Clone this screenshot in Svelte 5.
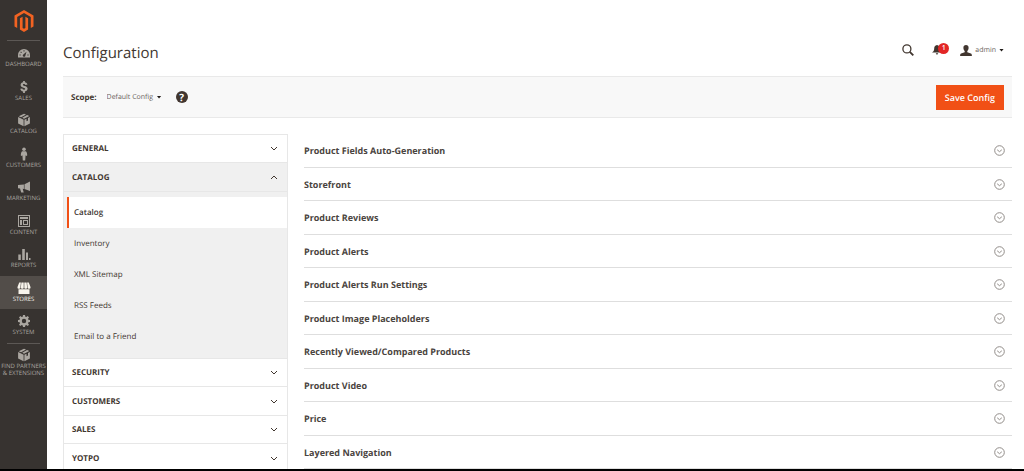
<script lang="ts">
  type MenuItem = { id: string; label: string; divider?: boolean };

  const menu: MenuItem[] = [
    { id: "dashboard", label: "Dashboard" },
    { id: "sales", label: "Sales" },
    { id: "catalog", label: "Catalog" },
    { id: "customers", label: "Customers" },
    { id: "marketing", label: "Marketing" },
    { id: "content", label: "Content" },
    { id: "reports", label: "Reports" },
    { id: "stores", label: "Stores" },
    { id: "system", label: "System" },
    { id: "partners", label: "Find Partners & Extensions", divider: true },
  ];

  const tabs = [
    { label: "General", items: [] },
    { label: "Catalog", items: ["Catalog", "Inventory", "XML Sitemap", "RSS Feeds", "Email to a Friend"] },
    { label: "Security", items: [] },
    { label: "Customers", items: [] },
    { label: "Sales", items: [] },
    { label: "Yotpo", items: [] },
  ];

  const sections = [
    "Product Fields Auto-Generation",
    "Storefront",
    "Product Reviews",
    "Product Alerts",
    "Product Alerts Run Settings",
    "Product Image Placeholders",
    "Recently Viewed/Compared Products",
    "Product Video",
    "Price",
    "Layered Navigation",
  ];

  let activeMenu = $state("stores");
  let openTab = $state("Catalog");
  let activeItem = $state("Catalog");
  let scope = $state("Default Config");

  function toggleTab(label: string) {
    openTab = openTab === label ? "" : label;
  }
</script>

{#snippet menuIcon(id: string)}
  <svg class="icon" viewBox="0 0 14 14" fill="currentColor" aria-hidden="true">
    {#if id === "dashboard"}
      <path fill-rule="evenodd" d="M1 11.500V9.200a6 6.200 0 0 1 12 0v2.300zM5.700 9.600a1.400 1.400 0 0 0 2.400.8L9.500 5.800 6.300 8.600zM2.500 8.500h1.200v1H2.500zM4 5.500l.9.900-.7.700-.9-.9zM6.500 4.200h1v1.300h-1zM10.400 8.500h1.200v1h-1.200z" />
    {:else if id === "sales"}
      <path d="M6.100 1h1.800v1.300c1.400.2 2.300 1 2.600 2.300l-2.100.3c-.2-.6-.6-.9-1.400-.9s-1.100.3-1.100.8c0 .6.600.8 1.700 1.100 1.800.4 3 1.100 3 2.700 0 1.600-1 2.600-2.700 2.800V13H6.100v-1.600c-1.700-.2-2.600-1.200-2.800-2.700l2.100-.2c.2.800.7 1.200 1.600 1.200.8 0 1.200-.3 1.200-.8 0-.7-.7-.9-1.700-1.200C4.800 7.300 3.600 6.600 3.600 5c0-1.400.9-2.400 2.500-2.700z" />
    {:else if id === "catalog" || id === "partners"}
      <path d="M7 .8l2 .8-4.900 2.600-2.400-1zM10.100 2.100l2.200 1L7 5.700l-1.800-.9zM1.100 4.100l5.500 2.600v6.500l-5.500-2.700zM12.900 4.100v6.400l-5.500 2.700V6.700l2.100-1v2.600l1.500-.7V5z" />
    {:else if id === "customers"}
      <circle cx="7" cy="2.300" r="1.800" />
      <path d="M5.300 4.300h3.400c1 .5 1.500 2 1.500 4.100l-1.200.5-.4-.8-.4 5.400H5.800l-.4-5.400-.4.800-1.200-.5c0-2.100.5-3.600 1.500-4.100z" />
    {:else if id === "marketing"}
      <path d="M13 1.500v9.500L7.500 9V4.300zM1 5l5.900-.5v4.400L5.700 8.800l1 3.700H4.200L3 8.500l-2-.3z" />
    {:else if id === "content"}
      <path fill-rule="evenodd" d="M1 1h12v12H1zM2 2v10h10V2zM3 3h8v2H3zM3 6h2v5H3zM6 6h5v5H6zM7 7v3h3V7z" />
    {:else if id === "reports"}
      <path d="M1.300 7.500h2.500V13H1.300zM5.200 2h2.600v11H5.200zM9 5.500h2V13H9zM12 11h1.500v2H12z" />
    {:else if id === "stores"}
      <path d="M2.200 1.500h1.700L3.400 6v.8c0 1.400-2.900 1.400-2.900 0V6zM4.400 1.500h2.300v5.300c0 1.400-2.800 1.400-2.800 0V6zM7.300 1.500h2.300l.5 4.500v.8c0 1.400-2.800 1.400-2.800 0zM10.100 1.500h1.700L13.500 6v.8c0 1.400-2.900 1.400-2.900 0V6zM1.500 8.300h11V13H1.500z" />
    {:else if id === "system"}
      <path fill-rule="evenodd" d="M6 1h2l.3 1.700 1 .4 1.400-1 1.300 1.300-1 1.400.4 1L13 6v2l-1.600.3-.4 1 1 1.400-1.300 1.300-1.400-1-1 .4L8 13H6l-.3-1.600-1-.4-1.400 1L2 10.700l1-1.400-.4-1L1 8V6l1.600-.2.4-1-1-1.400L3.300 2.100l1.400 1 1-.4zM7 4.800a2.200 2.200 0 1 0 0 4.400 2.200 2.200 0 0 0 0-4.400z" />
    {/if}
  </svg>
{/snippet}

<div class="admin">
  <aside class="sidebar">
    <a class="logo" href="#home" aria-label="Magento Admin">
      <svg viewBox="0 0 20 22" fill="#f26322" aria-hidden="true">
        <path d="M10 0l9.500 5.500v11L16.800 18V7L10 3.100 3.200 7v11L.5 16.500v-11z" />
        <path d="M5.900 8.300l2.700-1.600v11.200L10 18.700l1.400-.8V6.700l2.700 1.600v11.300L10 22l-4.100-2.400z" />
      </svg>
    </a>
    <nav aria-label="Main menu">
      {#each menu as item}
        <a
          href="#{item.id}"
          class="menu-item"
          class:active={activeMenu === item.id}
          class:divider={item.divider}
          onclick={() => (activeMenu = item.id)}
        >
          {@render menuIcon(item.id)}
          <span>{item.label}</span>
        </a>
      {/each}
    </nav>
  </aside>

  <main>
    <header>
      <h1>Configuration</h1>
      <div class="tools">
        <button class="tool" aria-label="Search">
          <svg width="12" height="12" viewBox="0 0 12 12" fill="none" stroke="#41362f" aria-hidden="true">
            <circle cx="4.900" cy="4.900" r="4" stroke-width="1.300" />
            <path d="M7.800 7.800l3.500 3.500" stroke-width="1.900" />
          </svg>
        </button>
        <button class="tool bell" aria-label="Notifications">
          <svg width="10" height="10" viewBox="0 0 10 10" fill="#41362f" aria-hidden="true">
            <path d="M5 0c2 .3 2.800 1.700 2.800 3.600 0 2 .7 3 2.200 4H0c1.500-1 2.200-2 2.200-4C2.200 1.700 3 .3 5 0zM3.800 8.300h2.400a1.200 1.200 0 0 1-2.400 0z" />
          </svg>
          <span class="badge">1</span>
        </button>
        <button class="tool account">
          <svg width="12" height="11" viewBox="0 0 12 11" fill="#41362f" aria-hidden="true">
            <path d="M6 0c1.700 0 2.600 1.100 2.600 2.700S7.900 5.600 7.300 6v1.300l3.600 1.200c.7.300 1 .9 1 2.500H.1c0-1.600.3-2.200 1-2.500l3.600-1.200V6c-.6-.4-1.300-1.700-1.300-3.300S4.300 0 6 0z" />
          </svg>
          <span>admin</span>
          <i class="caret"></i>
        </button>
      </div>
    </header>

    <div class="actions">
      <label for="scope">Scope:</label>
      <div class="scope">
        <select id="scope" bind:value={scope}>
          <option>Default Config</option>
        </select>
        <i class="caret"></i>
      </div>
      <button class="help" aria-label="What is this?">?</button>
      <button class="save">Save Config</button>
    </div>

    <div class="columns">
      <nav class="tabs" aria-label="Configuration sections">
        {#each tabs as tab}
          {@const open = openTab === tab.label}
          <button class="tab" class:open aria-expanded={open} onclick={() => toggleTab(tab.label)}>
            <span>{tab.label}</span>
            <svg width="8" height="5" viewBox="0 0 8 5" fill="none" stroke="#41362f" aria-hidden="true">
              <path d={open ? "M1 4l3-3 3 3" : "M1 1l3 3 3-3"} />
            </svg>
          </button>
          {#if open && tab.items.length}
            <ul>
              {#each tab.items as item}
                <li>
                  <a href="#{item}" class:current={activeItem === item} onclick={() => (activeItem = item)}>{item}</a>
                </li>
              {/each}
            </ul>
          {/if}
        {/each}
      </nav>

      <div class="sections">
        {#each sections as section}
          <button class="section">
            <span>{section}</span>
            <svg width="11" height="11" viewBox="0 0 11 11" fill="none" stroke="#918c88" aria-hidden="true">
              <circle cx="5.500" cy="5.500" r="4.800" />
              <path d="M3.200 4.800l2.300 1.900 2.300-1.900" />
            </svg>
          </button>
        {/each}
      </div>
    </div>
  </main>
</div>

<style>
  :global(body) { margin: 0; background: #fff; }
  .admin { display: flex; height: 100vh; box-sizing: border-box; overflow: hidden; border-bottom: 2px solid #000; font-family: "Open Sans", "Noto Sans", sans-serif; font-size: 8px; color: #41362f; text-rendering: geometricPrecision; }
  button { font: inherit; color: inherit; background: none; border: 0; padding: 0; cursor: pointer; text-rendering: inherit; }
  a { color: inherit; text-decoration: none; }

  .sidebar { flex: 0 0 47px; background: #373330; color: #aaa6a0; }
  .logo { display: flex; justify-content: center; height: 30px; margin: 0 7px; padding-top: 10px; border-bottom: 1px solid #5c5855; }
  .logo svg { width: 20px; height: 22px; }
  .menu-item { display: flex; flex-direction: column; align-items: center; gap: 1px; box-sizing: border-box; height: 34px; padding-top: 5px; position: relative; font-size: 6px; line-height: 7px; text-align: center; text-transform: uppercase; }
  .menu-item:nth-child(even) { height: 33px; }
  .menu-item .icon { width: 14px; height: 14px; flex: none; }
  .menu-item.active { background: #524d49; color: #f7f3eb; }
  .menu-item.divider { height: auto; }
  .menu-item.divider::before { content: ""; position: absolute; top: 0; left: 7px; right: 7px; border-top: 1px solid #5c5855; }

  main { flex: 1; min-width: 0; padding: 0 12px 0 16px; }
  header { display: flex; justify-content: space-between; align-items: center; height: 52px; padding-top: 24px; }
  h1 { margin: 0; padding-top: 6px; font-size: 15px; line-height: 22px; font-weight: 400; }
  .tools { display: flex; align-items: center; padding-right: 8px; }
  .tool { display: flex; align-items: center; height: 16px; }
  .bell { position: relative; margin-left: 18px; }
  .badge { position: absolute; top: 1px; left: 6px; width: 11px; height: 11px; border-radius: 50%; background: #e22626; color: #fff; font-size: 7px; line-height: 11px; font-weight: 600; text-align: center; }
  .account { margin-left: 18px; gap: 3px; font-size: 7px; color: #6b635d; }
  .caret { width: 5px; height: 3px; background: #1f1a17; clip-path: polygon(0 0, 100% 0, 50% 100%); pointer-events: none; }

  .actions { display: flex; align-items: center; height: 40px; padding: 0 8px; background: #f8f8f8; border: solid #e9e9e9; border-width: 1px 0; }
  .actions label { font-weight: 700; }
  .scope { display: flex; align-items: center; margin-left: 10px; gap: 3px; }
  .scope select { appearance: none; font: inherit; font-size: 7px; color: #6b635d; background: none; border: 0; padding: 0; text-rendering: inherit; }
  .help { width: 12px; height: 12px; margin-left: 14px; border-radius: 50%; background: #41362f; color: #fff; font-size: 10px; line-height: 12px; font-weight: 700; }
  .save { margin-left: auto; height: 25px; padding: 0 9px; background: #f15016; color: #fff; font-size: 9px; font-weight: 600; }

  .columns { display: flex; align-items: flex-start; gap: 16px; margin-top: 16px; }
  .tabs { flex: 0 0 225px; box-sizing: border-box; border: 1px solid #e7e7e7; }
  .tab { display: flex; align-items: center; justify-content: space-between; width: 100%; height: 29px; padding: 0 9px 0 8px; border-bottom: 1px solid #e7e7e7; font-weight: 700; text-transform: uppercase; }
  .tab:nth-of-type(odd) { height: 28px; }
  .tab.open { background: #f0f0f0; }
  ul { list-style: none; margin: 0; padding: 5px 0 6px 3px; background: #f0f0f0; border-bottom: 1px solid #e7e7e7; }
  li a { display: block; height: 31px; padding-left: 5px; border-left: 2px solid transparent; line-height: 31px; }
  li a.current { background: #fff; border-color: #f15016; font-weight: 600; }

  .sections { flex: 1; min-width: 0; }
  .section { display: flex; align-items: center; justify-content: space-between; width: 100%; height: 34px; padding-right: 7px; border-bottom: 1px solid #dedede; color: #4a4440; font-size: 9px; font-weight: 700; text-align: left; }
  .section:nth-child(even) { height: 33px; }
</style>
